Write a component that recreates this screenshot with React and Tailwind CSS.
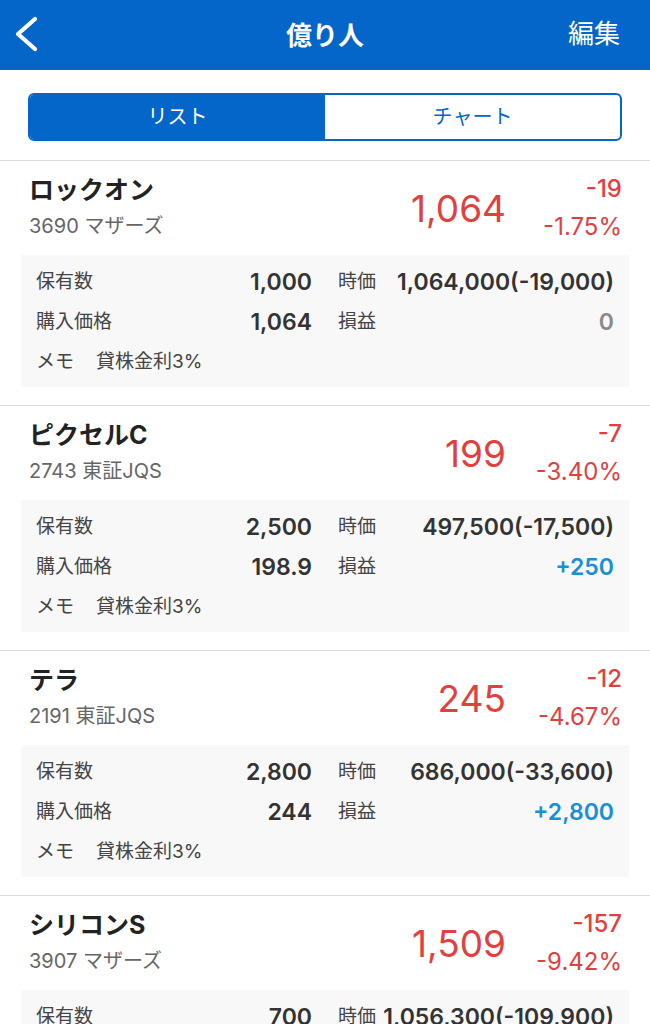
import React from "react";

const stocks = [
  {
    name: "ロックオン",
    code: "3690 マザーズ",
    price: "1,064",
    diff: "-19",
    rate: "-1.75%",
    qty: "1,000",
    value: "1,064,000(-19,000)",
    cost: "1,064",
    pl: "0",
    plTone: "zero",
    memo: "貸株金利3%",
  },
  {
    name: "ピクセルC",
    code: "2743 東証JQS",
    price: "199",
    diff: "-7",
    rate: "-3.40%",
    qty: "2,500",
    value: "497,500(-17,500)",
    cost: "198.9",
    pl: "+250",
    plTone: "up",
    memo: "貸株金利3%",
  },
  {
    name: "テラ",
    code: "2191 東証JQS",
    price: "245",
    diff: "-12",
    rate: "-4.67%",
    qty: "2,800",
    value: "686,000(-33,600)",
    cost: "244",
    pl: "+2,800",
    plTone: "up",
    memo: "貸株金利3%",
  },
  {
    name: "シリコンS",
    code: "3907 マザーズ",
    price: "1,509",
    diff: "-157",
    rate: "-9.42%",
    qty: "700",
    value: "1,056,300(-109,900)",
    cost: "1,650",
    pl: "-109,900",
    plTone: "down",
    memo: "貸株金利3%",
  },
];

const font = "font-['Inter','Noto_Sans_CJK_JP',sans-serif]";

function StockCard({ s }) {
  const plColor =
    s.plTone === "up" ? "text-[#1b8fd6]" : s.plTone === "down" ? "text-[#e2403f]" : "text-[#8a8a8a]";

  return (
    <div className="border-t border-[#dcdcdc] pb-[18px]">
      <div className="flex items-start justify-between">
        <div className="pl-[29px] pt-[13px]">
          <div className="text-[25px] leading-8 font-bold text-[#222]">{s.name}</div>
          <div className="mt-1 text-[20px] leading-8 text-[#666]">{s.code}</div>
        </div>
        <div className="flex items-center pr-[28px] pt-[9px] text-[#e2403f]">
          <div className="text-[37px] leading-none">{s.price}</div>
          <div className="w-[116px] text-right text-[24px] leading-[38px]">
            <div className="font-medium">{s.diff}</div>
            <div>{s.rate}</div>
          </div>
        </div>
      </div>

      {/* holding details */}
      <div className="mx-[21px] mt-[9px] bg-[#f8f8f8] px-[15px] pb-[5px] pt-[7px] text-[#444]">
        <div className="flex h-10 items-center">
          <div className="flex w-[276px] items-center justify-between">
            <span className="text-[19px]">保有数</span>
            <span className="text-[23px] font-semibold text-[#333]">{s.qty}</span>
          </div>
          <div className="ml-[26px] flex flex-1 items-center justify-between">
            <span className="text-[19px]">時価</span>
            <span className="text-[23px] font-semibold text-[#333]">{s.value}</span>
          </div>
        </div>
        <div className="flex h-10 items-center">
          <div className="flex w-[276px] items-center justify-between">
            <span className="text-[19px]">購入価格</span>
            <span className="text-[23px] font-semibold text-[#333]">{s.cost}</span>
          </div>
          <div className="ml-[26px] flex flex-1 items-center justify-between">
            <span className="text-[19px]">損益</span>
            <span className={`text-[23px] font-semibold ${plColor}`}>{s.pl}</span>
          </div>
        </div>
        <div className="flex h-10 items-center text-[19px]">
          <span className="w-[60px]">メモ</span>
          <span>{s.memo}</span>
        </div>
      </div>
    </div>
  );
}

export default function App() {
  return (
    <div className={`min-h-screen w-[650px] overflow-hidden bg-white ${font}`}>
      <header className="relative flex h-[70px] items-center justify-center bg-[#0466c8] text-white">
        <svg
          className="absolute left-[13px] top-[16px]"
          width="26"
          height="36"
          viewBox="0 0 26 36"
          fill="none"
          stroke="white"
          strokeWidth="4.2"
          strokeLinecap="round"
          strokeLinejoin="round"
        >
          <path d="M22 3 L5 18 L22 33" />
        </svg>
        <h1 className="text-[26px] font-semibold">億り人</h1>
        <button className="absolute right-[30px] top-[14px] text-[26px] leading-10">編集</button>
      </header>

      <div className="px-[28px] pb-[19px] pt-[23px]">
        <div className="flex h-12 overflow-hidden rounded-md border-2 border-[#0466c8] text-[20px]">
          <div className="flex flex-1 items-center justify-center bg-[#0466c8] text-white">リスト</div>
          <div className="flex flex-1 items-center justify-center text-[#0466c8]">チャート</div>
        </div>
      </div>

      {stocks.map((s) => (
        <StockCard key={s.name} s={s} />
      ))}
    </div>
  );
}
